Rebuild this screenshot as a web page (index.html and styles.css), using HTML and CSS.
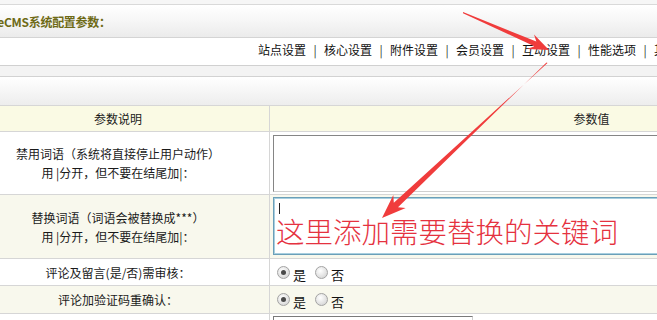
FILE: index.html
```html
<!DOCTYPE html>
<html lang="zh-CN">
<head>
<meta charset="utf-8">
<title>DedeCMS系统配置参数</title>
<link rel="stylesheet" href="styles.css">
</head>
<body>
<div class="page">
  <div class="topstrip"></div>
  <div class="titlebar"><span class="title">DedeCMS系统配置参数：</span></div>
  <div class="nav">
    <span class="nav-item">站点设置</span><span class="sep">|</span>
    <span class="nav-item">核心设置</span><span class="sep">|</span>
    <span class="nav-item">附件设置</span><span class="sep">|</span>
    <span class="nav-item">会员设置</span><span class="sep">|</span>
    <span class="nav-item">互动设置</span><span class="sep">|</span>
    <span class="nav-item">性能选项</span><span class="sep">|</span>
    <span class="nav-item">其它选项</span><span class="sep">|</span>
    <span class="nav-item">模块设置</span>
  </div>
  <div class="strip"></div>
  <div class="bar"></div>

  <div class="grid">
    <div class="row head">
      <div class="cell label">参数说明</div>
      <div class="cell value center">参数值</div>
    </div>
    <div class="row r1">
      <div class="cell label">禁用词语（系统将直接停止用户动作）<br>用 |分开，但不要在结尾加|：</div>
      <div class="cell value"><div class="area"></div></div>
    </div>
    <div class="row r2 alt">
      <div class="cell label">替换词语（词语会被替换成***）<br>用 |分开，但不要在结尾加|：</div>
      <div class="cell value"><div class="area focus"><span class="caret"></span><div class="note">这里添加需要替换的关键词</div></div></div>
    </div>
    <div class="row r3">
      <div class="cell label">评论及留言(是/否)需审核：</div>
      <div class="cell value radios">
        <span class="radio on"></span><span class="rlabel">是</span>
        <span class="radio"></span><span class="rlabel">否</span>
      </div>
    </div>
    <div class="row r4 alt">
      <div class="cell label">评论加验证码重确认：</div>
      <div class="cell value radios">
        <span class="radio on"></span><span class="rlabel">是</span>
        <span class="radio"></span><span class="rlabel">否</span>
      </div>
    </div>
    <div class="row r5">
      <div class="cell label"></div>
      <div class="cell value"><div class="input"></div></div>
    </div>
  </div>
</div>

<svg class="arrows" width="657" height="320" viewBox="0 0 657 320" xmlns="http://www.w3.org/2000/svg">
  <polygon fill="#f03c3c" points="463,12 536.3,41.6 534,34.5 549,50 527.4,49.1 534.3,46.2 463,13.2"/>
  <polygon fill="#f03c3c" points="547.5,63 393.8,202.8 393.3,194.9 382,218 405.7,208.1 398,207.2 546.5,62.4"/>
</svg>
</body>
</html>
```

FILE: styles.css
```css
html, body {
  margin: 0;
  padding: 0;
  background: #ffffff;
  overflow: hidden;
}

body {
  width: 657px;
  height: 320px;
  position: relative;
  font-family: "Noto Sans CJK SC", "Liberation Sans", sans-serif;
  font-size: 12px;
  color: #222;
}

.page {
  width: 946px;
  margin-left: -33px;
}

.topstrip {
  height: 4px;
  background: #f6f6f6;
  border-bottom: 1px solid #d9d9d9;
}

.titlebar {
  height: 32px;
  display: flex;
  align-items: center;
  padding-left: 8px;
  background: linear-gradient(#ffffff, #f7f7f7 45%, #ebebeb);
  border-bottom: 1px solid #d4d4d4;
}

.title {
  font-weight: bold;
  color: #6e6a16;
  font-size: 12px;
  letter-spacing: -0.3px;
}

.nav {
  height: 28px;
  display: flex;
  align-items: center;
  padding-left: 291px;
  padding-bottom: 0;
  box-sizing: border-box;
  white-space: nowrap;
  background: #ffffff;
  border-bottom: 1px solid #d0d0d0;
  color: #111;
  line-height: 24px;
}

.nav-item {
  display: inline-block;
  width: 48px;
  padding-bottom: 4px;
}

.sep {
  display: inline-block;
  width: 18px;
  text-align: center;
  padding-bottom: 4px;
  color: #333;
}

.strip {
  height: 10px;
  background: #f3f3f3;
  border-bottom: 1px solid #d2d2d2;
}

.bar {
  height: 28px;
  background: linear-gradient(#ffffff, #f6f6f6 50%, #ededed);
  border-bottom: 1px solid #d6d6d6;
}

.row {
  display: grid;
  grid-template-columns: 302px 1fr;
  border-bottom: 1px solid #d6d6d6;
  background: #ffffff;
}

.row.alt {
  background: #f8f8ed;
}

.row.head {
  height: 25px;
  background: #fafae4;
}

.row.r1 { height: 62px; }
.row.r2 { height: 63px; }
.row.r3 { height: 26px; }
.row.r4 { height: 27px; }
.row.r5 { height: 30px; }

.cell {
  display: flex;
  align-items: center;
}

.label {
  justify-content: center;
  text-align: center;
  line-height: 19px;
  color: #1a1a1a;
}

.value {
  border-left: 1px solid #d6d6d6;
  padding-left: 3px;
}

.value.center {
  justify-content: center;
  padding-left: 0;
}

.r1 .value { align-items: flex-start; padding-top: 3px; }
.r2 .value { align-items: flex-start; padding-top: 2px; }
.r5 .value { align-items: flex-start; padding-top: 2px; }

.area {
  box-sizing: border-box;
  width: 540px;
  height: 57px;
  background: #ffffff;
  border: 1px solid;
  border-color: #858585 #cfcfcf #cfcfcf #858585;
}

.area.focus {
  height: 58px;
  border: 1px solid #6b9fb8;
  box-shadow: 0 0 0 1px #a8cfe0 inset;
  padding: 5px 0 0 2px;
  position: relative;
}

.caret {
  display: block;
  width: 1px;
  height: 11px;
  margin-left: 3px;
  background: #222;
}

.note {
  font-size: 28.5px;
  line-height: 30px;
  color: #e5323f;
  font-weight: 300;
  white-space: nowrap;
  margin-top: 2px;
  letter-spacing: 0;
}

.radios {
  gap: 0;
}

.radio {
  display: inline-block;
  box-sizing: border-box;
  width: 13px;
  height: 13px;
  border-radius: 50%;
  border: 1px solid #a3a3a3;
  background: radial-gradient(circle at 40% 35%, #ffffff, #dcdcdc 70%, #c8c8c8);
  margin-left: 4px;
  position: relative;
}

.radio.on::after {
  content: "";
  position: absolute;
  left: 3px;
  top: 3px;
  width: 5px;
  height: 5px;
  border-radius: 50%;
  background: #4a4a4a;
}

.rlabel {
  display: inline-block;
  margin-left: 3px;
  margin-right: 5px;
  font-size: 13px;
  color: #111;
  padding-top: 4px;
}

.input {
  box-sizing: border-box;
  width: 200px;
  height: 22px;
  background: #fff;
  border: 1px solid;
  border-color: #7a7a7a #cfcfcf #cfcfcf #7a7a7a;
}

.arrows {
  position: absolute;
  left: 0;
  top: 0;
  pointer-events: none;
}
```
